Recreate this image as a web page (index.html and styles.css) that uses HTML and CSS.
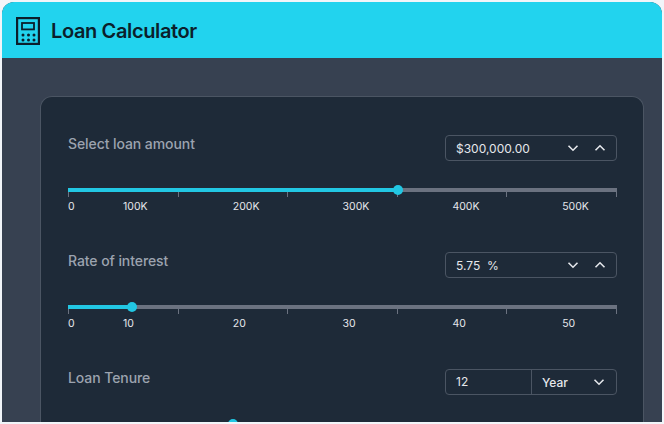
FILE: index.html
```html
<!DOCTYPE html>
<html lang="en">
<head>
<meta charset="utf-8">
<title>Loan Calculator</title>
<link rel="stylesheet" href="styles.css">
</head>
<body>
<main class="app">
  <header class="topbar">
    <svg class="calc" viewBox="0 0 24 28" fill="none" stroke="#0b1f2c" stroke-width="2.2">
      <rect x="1.1" y="1.1" width="21.8" height="25.8"/>
      <rect x="6" y="6" width="12" height="6.4" stroke-width="1.8"/>
      <g fill="#0b1f2c" stroke="none">
        <circle cx="7" cy="18" r="1.5"/><circle cx="12.5" cy="18" r="1.5"/><circle cx="18" cy="18" r="1.5"/>
        <circle cx="7" cy="23" r="1.5"/><circle cx="12.5" cy="23" r="1.5"/><circle cx="18" cy="23" r="1.5"/>
      </g>
    </svg>
    <h1 class="title">Loan Calculator</h1>
  </header>
  <section class="stage">
    <div class="card">
      <div class="field">
        <div class="field-head">
          <span class="label">Select loan amount</span>
          <div class="control">
            <span class="value">$300,000.00</span>
            <svg class="chev chev-a" viewBox="0 0 12 8"><path d="M1.5 1.8 6 6.2l4.5-4.4"/></svg>
            <svg class="chev chev-b" viewBox="0 0 12 8"><path d="M1.5 6.2 6 1.8l4.5 4.4"/></svg>
          </div>
        </div>
        <div class="slider">
          <div class="fill fill-a"></div>
          <div class="thumb thumb-a"></div>
        </div>
        <div class="ticks"><i></i><i></i><i></i><i></i><i></i><i></i></div>
        <div class="scale"><span>0</span><span>100K</span><span>200K</span><span>300K</span><span>400K</span><span>500K</span></div>
      </div>
      <div class="field">
        <div class="field-head">
          <span class="label">Rate of interest</span>
          <div class="control">
            <span class="value">5.75&nbsp; %</span>
            <svg class="chev chev-a" viewBox="0 0 12 8"><path d="M1.5 1.8 6 6.2l4.5-4.4"/></svg>
            <svg class="chev chev-b" viewBox="0 0 12 8"><path d="M1.5 6.2 6 1.8l4.5 4.4"/></svg>
          </div>
        </div>
        <div class="slider">
          <div class="fill fill-b"></div>
          <div class="thumb thumb-b"></div>
        </div>
        <div class="ticks"><i></i><i></i><i></i><i></i><i></i><i></i></div>
        <div class="scale"><span>0</span><span>10</span><span>20</span><span>30</span><span>40</span><span>50</span></div>
      </div>
      <div class="field">
        <div class="field-head">
          <span class="label">Loan Tenure</span>
          <div class="control split">
            <span class="value years">12</span>
            <span class="unit">Year</span>
            <svg class="chev chev-c" viewBox="0 0 12 8"><path d="M1.5 1.8 6 6.2l4.5-4.4"/></svg>
          </div>
        </div>
        <div class="slider">
          <div class="fill fill-c"></div>
          <div class="thumb thumb-c"></div>
        </div>
      </div>
    </div>
  </section>
</main>
</body>
</html>
```
FILE: styles.css
```css
* { box-sizing: border-box; }
html, body { margin: 0; height: 100%; }
body {
  background: #f1f5f9;
  padding: 2px;
  overflow: hidden;
  font-family: Inter, "Liberation Sans", sans-serif;
}
.app {
  height: 420px;
  overflow: hidden;
  border-radius: 12px 12px 0 0;
  background: #374151;
}
.topbar {
  height: 56px;
  background: #22d3ee;
  display: flex;
  align-items: center;
  padding-left: 14px;
  gap: 11px;
}
.calc { width: 24px; height: 28px; flex: none; margin-top: 2px; }
.title {
  margin: 0;
  font-size: 20px;
  line-height: 28px;
  font-weight: 600;
  color: #0b1f2c;
  letter-spacing: -0.37px;
  margin-top: 2px;
}
.stage { padding: 38px 18px 0 38px; }
.card {
  height: 420px;
  background: #1e2a38;
  border: 1px solid #4b5563;
  border-bottom: 0;
  border-radius: 12px;
  padding: 38px 26px 0 27px;
}
.field { height: 117px; }
.field-head {
  display: flex;
  justify-content: space-between;
  align-items: flex-start;
  height: 53px;
}
.label {
  font-size: 14px;
  line-height: 20px;
  font-weight: 500;
  color: #9ca3af;
  margin-top: -1px;
  letter-spacing: -0.08px;
}
.control {
  width: 172px;
  height: 26px;
  border: 1px solid #4b5563;
  border-radius: 4px;
  display: flex;
  align-items: center;
  padding-left: 10px;
  color: #e5e7eb;
  font-size: 12px;
}
.value { flex: 1; }
.chev { width: 12px; height: 8px; fill: none; stroke: #e5e7eb; stroke-width: 1.6; flex: none; }
.chev-a { margin-right: 15px; }
.chev-b { margin-right: 10px; }
.split { padding-left: 0; }
.years { flex: none; width: 86px; height: 100%; padding-left: 10px; line-height: 24px; border-right: 1px solid #4b5563; }
.unit { flex: 1; padding-left: 10px; font-weight: 500; }
.chev-c { margin-right: 11px; }
.slider {
  position: relative;
  height: 4px;
  background: #6b7280;
}
.fill { height: 100%; background: #22c7e3; }
.fill-a { width: 329px; }
.fill-b { width: 63px; }
.fill-c { width: 164px; }
.thumb {
  position: absolute;
  top: -3px;
  width: 10px;
  height: 10px;
  border-radius: 50%;
  background: #22c7e3;
}
.thumb-a { left: 324.5px; }
.thumb-b { left: 58.5px; }
.thumb-c { left: 159.5px; }
.ticks {
  display: flex;
  justify-content: space-between;
  height: 5px;
}
.ticks i { width: 1px; height: 5px; background: #6b7280; }
.scale {
  display: flex;
  font-size: 10.5px;
  line-height: 14px;
  color: #e5e7eb;
  margin-top: 3px;
}
.scale span { flex: none; width: 109.8px; }
.scale span:first-child { width: 55px; }
```
